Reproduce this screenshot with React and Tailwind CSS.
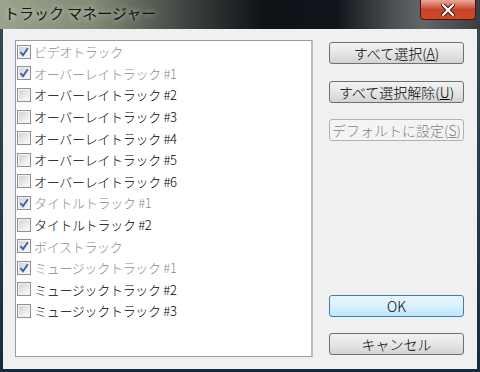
import React from "react";

const tracks = [
  { label: "ビデオトラック", checked: true },
  { label: "オーバーレイトラック #1", checked: true },
  { label: "オーバーレイトラック #2", checked: false },
  { label: "オーバーレイトラック #3", checked: false },
  { label: "オーバーレイトラック #4", checked: false },
  { label: "オーバーレイトラック #5", checked: false },
  { label: "オーバーレイトラック #6", checked: false },
  { label: "タイトルトラック #1", checked: true },
  { label: "タイトルトラック #2", checked: false },
  { label: "ボイストラック", checked: true },
  { label: "ミュージックトラック #1", checked: true },
  { label: "ミュージックトラック #2", checked: false },
  { label: "ミュージックトラック #3", checked: false },
];

const font = { fontFamily: '"Noto Sans CJK JP", "Noto Sans", sans-serif' };

function CheckBox({ checked }) {
  return (
    <span className="w-[14px] h-[14px] shrink-0 border border-[#8f8f8f] bg-white flex items-center justify-center">
      <span className="w-[12px] h-[12px] border border-[#f4f4f4] bg-gradient-to-br from-[#d3d3d3] to-[#fbfbfb] flex items-center justify-center">
        {checked && (
          <svg width="10" height="10" viewBox="0 0 10 10">
            <path d="M1.5 5.2 L4 8.2 L8.8 1.3" fill="none" stroke="#3f5cb0" strokeWidth="1.9" />
          </svg>
        )}
      </span>
    </span>
  );
}

function Button({ children, disabled, primary, className = "" }) {
  let cls =
    "w-[135px] h-[22px] rounded-[3px] border flex items-center justify-center text-[14px] font-light leading-none ";
  if (primary) cls += "border-[#3c7fb1] bg-gradient-to-b from-[#eaf6fd] via-[#d9f0fc] to-[#bee6fd] text-black";
  else if (disabled) cls += "border-[#adb2b5] bg-[#f4f4f4] text-[#838383]";
  else cls += "border-[#707070] bg-gradient-to-b from-[#f2f2f2] via-[#e6e6e6] to-[#d3d3d3] text-black";
  return <div className={cls + " " + className}>{children}</div>;
}

export default function App() {
  return (
    <div className="w-[480px] h-[372px] overflow-hidden flex flex-col bg-gradient-to-b from-[#3a4a50] to-[#1a2a3a]" style={font}>
      <div className="h-[29px] shrink-0 flex items-start bg-[linear-gradient(90deg,#9aa38c_0%,#7f8a74_20%,#39403d_40%,#0d1217_55%,#10151b_70%,#4b5054_82%,#62666a_88%,#3a3e42_100%)]">
        <div className="pl-[4px] pt-[3px] text-[15px] font-normal leading-[20px] text-[#141414] [text-shadow:0_0_6px_rgba(255,255,255,0.8)]">
          トラック マネージャー
        </div>
        <div className="ml-auto mr-[4px] w-[56px] h-[20px] rounded-b-[4px] border border-t-0 border-[#4a1510] bg-gradient-to-b from-[#e9a99b] via-[#c8432c] to-[#d2481f] flex items-center justify-center">
          <svg width="14" height="12" viewBox="0 0 14 12">
            <path d="M2 1 L12 11 M12 1 L2 11" stroke="#3a0a05" strokeWidth="4" strokeLinecap="round" />
            <path d="M2 1 L12 11 M12 1 L2 11" stroke="#ffffff" strokeWidth="2.4" strokeLinecap="round" />
          </svg>
        </div>
      </div>
      <div className="flex-1 flex px-[3px] pb-[3px]">
        <div className="flex-1 bg-[#f0f0f0] flex pl-[12px] pt-[11px]">
          <div className="w-[298px] h-[317px] bg-white border border-[#9a9aae] border-r-[2px] border-r-[#bcbcc4]">
            {tracks.map((t) => (
              <div key={t.label} className="h-[21.6px] flex items-center pl-[1px] gap-[3px]">
                <CheckBox checked={t.checked} />
                <span className={"text-[13px] font-light leading-none whitespace-nowrap tracking-[-0.3px] " + (t.checked ? "text-[#8d8d8d]" : "text-black")}>
                  {t.label}
                </span>
              </div>
            ))}
          </div>
          <div className="ml-[16px] pt-[2px] flex flex-col">
            <Button>
              すべて選択(<span className="underline">A</span>)
            </Button>
            <Button className="mt-[17px]">
              すべて選択解除(<span className="underline">U</span>)
            </Button>
            <Button disabled className="mt-[16px]">
              デフォルトに設定(<span className="underline">S</span>)
            </Button>
            <Button primary className="mt-[154px]">
              OK
            </Button>
            <Button className="mt-[16px]">キャンセル</Button>
          </div>
        </div>
      </div>
    </div>
  );
}
